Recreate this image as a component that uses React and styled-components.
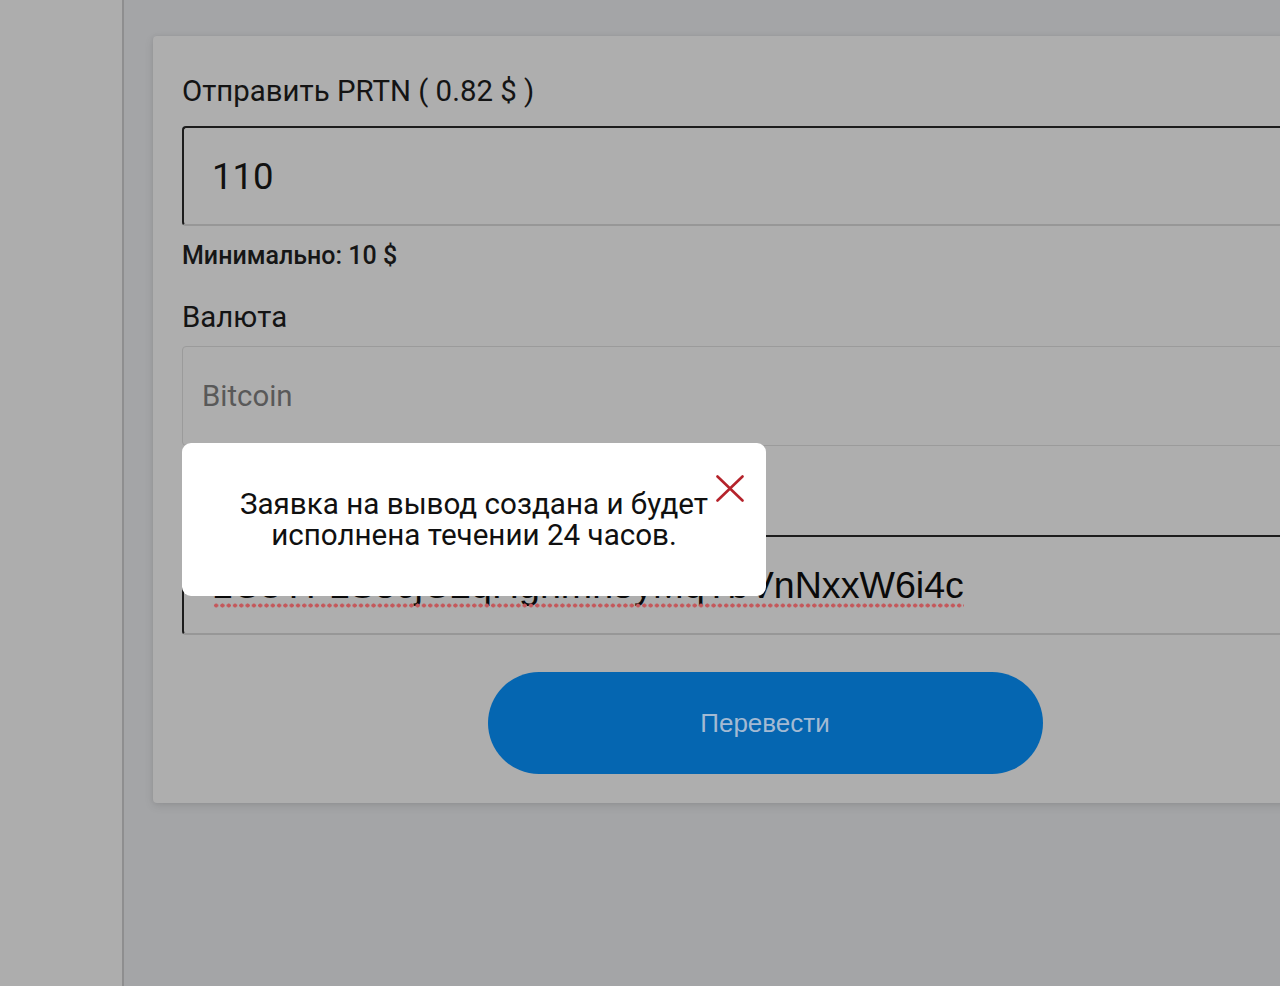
import React from "react";
import styled, { createGlobalStyle } from "styled-components";

const Global = createGlobalStyle`
  html, body { margin: 0; padding: 0; }
  body {
    width: 1280px;
    height: 986px;
    overflow: hidden;
    background: #a4a5a7;
    font-family: Roboto, "Noto Sans", sans-serif;
  }
  * { box-sizing: border-box; }
`;

const Screen = styled.div`
  display: flex;
  width: 1280px;
  height: 986px;
  overflow: hidden;
  position: relative;
`;

const Sidebar = styled.aside`
  flex: 0 0 124px;
  background: #adadad;
  border-right: 2px solid #8e8e8f;
`;

const Main = styled.main`
  flex: 1 0 auto;
  padding: 36px 0 0 29px;
  background: #a4a5a7;
`;

const Card = styled.section`
  position: relative;
  width: 1224px;
  padding: 39px 29px 29px;
  background: #aeaeae;
  border-radius: 4px;
  box-shadow: 0 3px 10px rgba(0, 0, 0, 0.1), 0 0 4px rgba(0, 0, 0, 0.06);
  display: flex;
  flex-direction: column;
`;

const Label = styled.div`
  font-size: 29.4px;
  line-height: 32px;
  color: #141414;
  margin-top: ${(p) => p.$top || 0}px;
  margin-bottom: ${(p) => p.$gap || 19}px;
`;

const Hint = styled.div`
  font-size: 25px;
  font-weight: 500;
  line-height: 30px;
  color: #161616;
  margin-top: 15px;
  height: 30px;
`;

const Spacer = styled.div`
  height: ${(p) => p.$h}px;
  flex: 0 0 auto;
`;

const Field = styled.div`
  height: 100px;
  width: 100%;
  display: flex;
  align-items: center;
  border-radius: 4px;
  background: #aeaeae;
  padding-left: ${(p) => p.$pad || 28}px;
  border: 1px solid #9b9b9b;
  ${(p) =>
    p.$inset &&
    `
    border-top: 2px solid #1c1c1c;
    border-left: 2px solid #1c1c1c;
    border-bottom: 2px solid #979797;
  `}
`;

const Value = styled.span`
  font-size: 36.5px;
  color: #111;
`;

const Placeholder = styled.span`
  font-size: 29.4px;
  color: #595959;
`;

const Address = styled.span`
  position: relative;
  font-family: "Liberation Sans", Arial, sans-serif;
  font-size: 37.6px;
  color: #0a0a0a;
  white-space: nowrap;
  &::after {
    content: "";
    position: absolute;
    left: 1px;
    right: 0;
    bottom: -1px;
    height: 5px;
    background-image: radial-gradient(circle, #c4585b 1.8px, transparent 2.3px);
    background-size: 6.3px 5px;
    background-repeat: repeat-x;
  }
`;

const Button = styled.button`
  align-self: center;
  width: 555px;
  height: 102px;
  margin-top: 37px;
  border: none;
  border-radius: 51px;
  background: #0566b1;
  color: #a3bad3;
  font-family: "Liberation Sans", Arial, sans-serif;
  font-size: 26px;
`;

const Modal = styled.div`
  position: absolute;
  left: 182px;
  top: 443px;
  width: 584px;
  height: 153px;
  background: #ffffff;
  border-radius: 9px;
  display: flex;
  align-items: center;
  justify-content: center;
  z-index: 5;
`;

const Message = styled.p`
  margin: 0;
  text-align: center;
  font-size: 29.6px;
  line-height: 31px;
  color: #101010;
`;

const Close = styled.button`
  position: absolute;
  top: 30px;
  right: 20px;
  width: 32px;
  height: 30px;
  padding: 0;
  border: none;
  background: transparent;
  display: flex;
  align-items: center;
  justify-content: center;
`;

export default function App() {
  return (
    <>
      <Global />
      <Screen>
        <Sidebar />
        <Main>
          <Card>
            <Label>Отправить PRTN ( 0.82 $ )</Label>
            <Field $inset>
              <Value>110</Value>
            </Field>
            <Hint>Минимально: 10 $</Hint>
            <Label $top={30} $gap={13}>Валюта</Label>
            <Field $pad={19}>
              <Placeholder>Bitcoin</Placeholder>
            </Field>
            <Spacer $h={89} />
            <Field $inset>
              <Address>1C8YF1S5cjC2qHgnmh5yMqTbVnNxxW6i4c</Address>
            </Field>
            <Button>Перевести</Button>
          </Card>
        </Main>
        <Modal>
          <Message>
            Заявка на вывод создана и будет
            <br />
            исполнена течении 24 часов.
          </Message>
          <Close aria-label="Закрыть">
            <svg width="28" height="27" viewBox="0 0 28 27">
              <path
                d="M1.5 1.5 L26.5 25.5 M26.5 1.5 L1.5 25.5"
                stroke="#b5232b"
                strokeWidth="2.6"
                strokeLinecap="round"
                fill="none"
              />
            </svg>
          </Close>
        </Modal>
      </Screen>
    </>
  );
}
